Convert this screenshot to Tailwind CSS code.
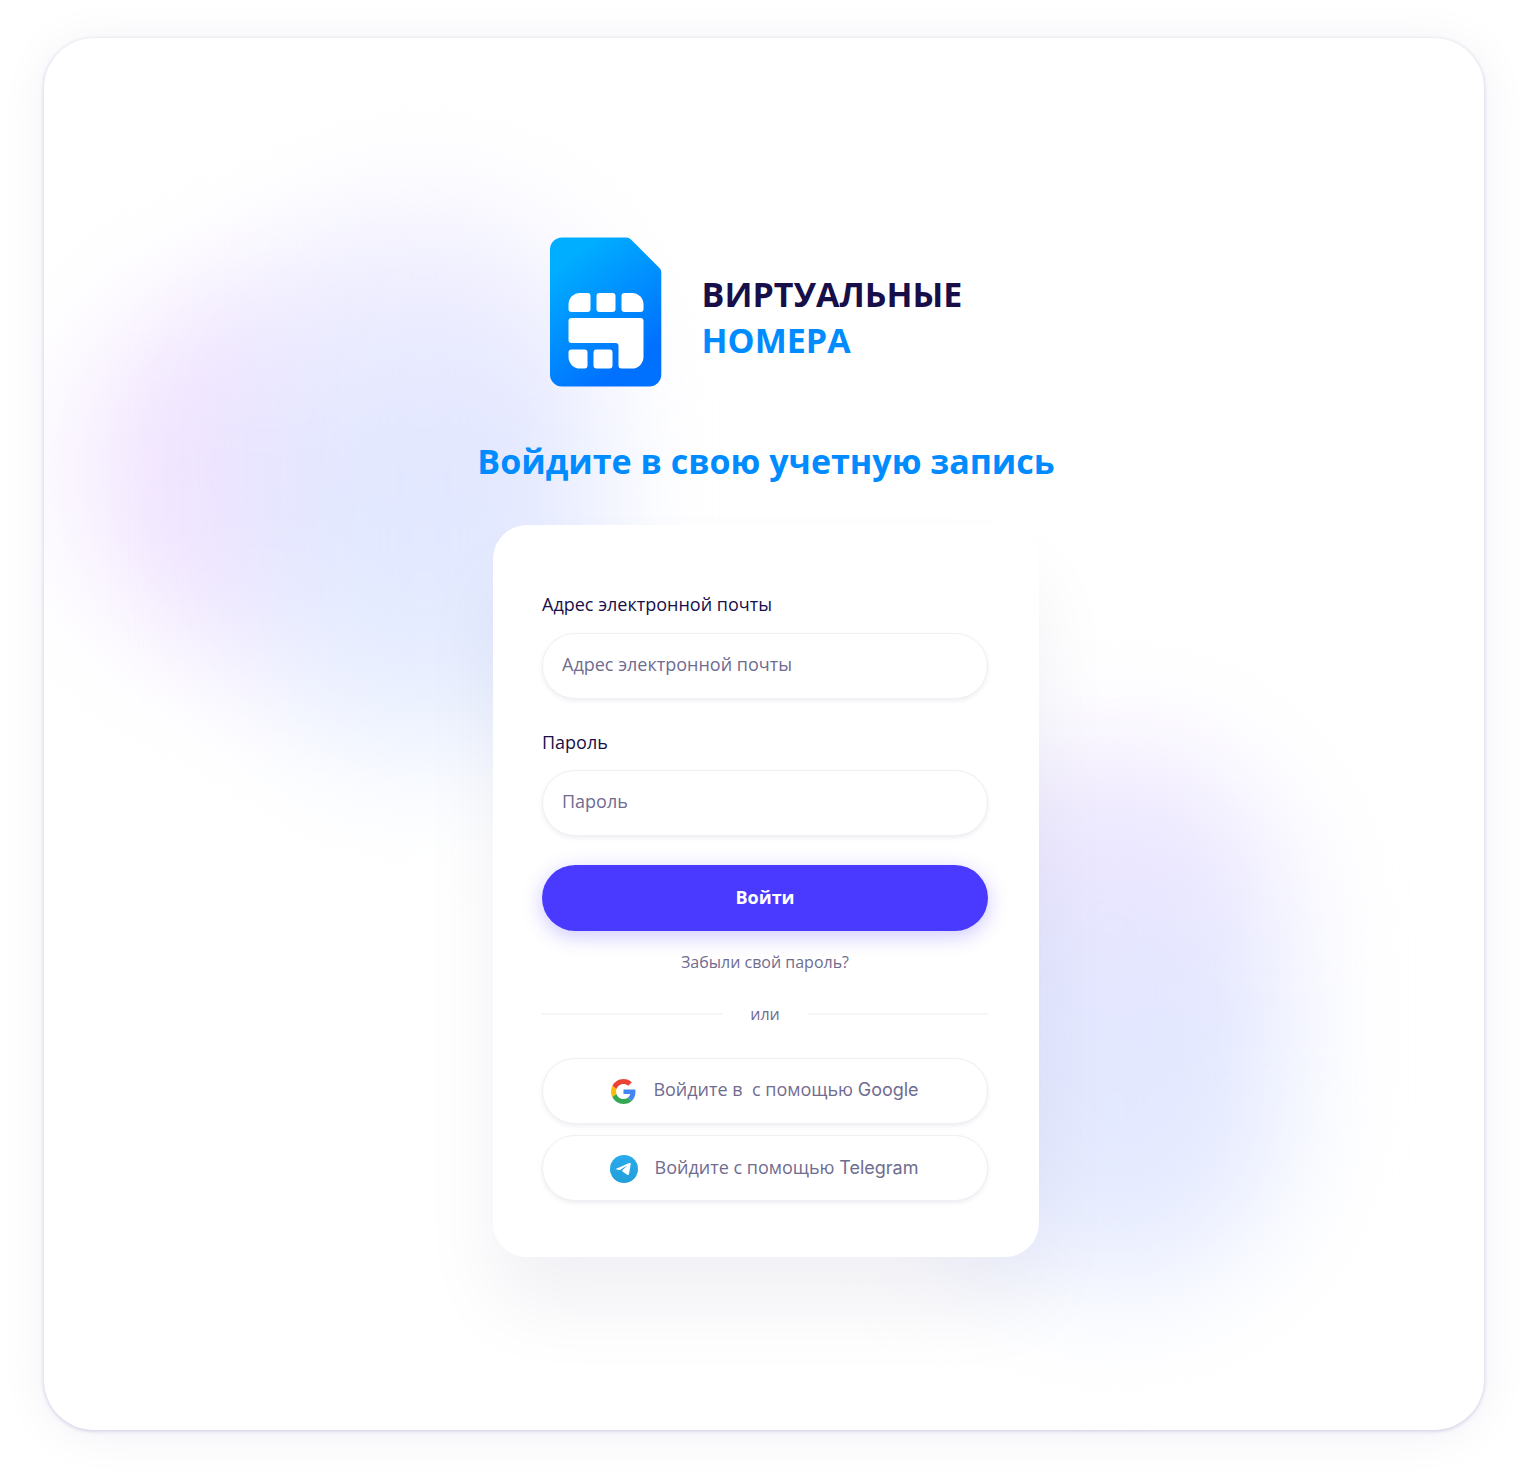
<!DOCTYPE html>
<html lang="ru">
<head>
<meta charset="utf-8">
<meta name="viewport" content="width=device-width, initial-scale=1">
<title>Виртуальные номера — вход</title>
<script src="https://cdn.jsdelivr.net/npm/@tailwindcss/browser@4"></script>
</head>
<body class="min-h-screen bg-white px-[44px] pt-[38px] pb-[50px] font-['Open_Sans','Noto_Sans',sans-serif] text-[#6f6c90]">
  <main class="relative isolate flex flex-col items-center overflow-hidden rounded-[50px] bg-white pt-[199px] pb-[173px] pl-1 shadow-[0_1px_4px_rgba(25,15,120,0.2),0_4px_50px_rgba(25,15,120,0.06)]">
    <!-- Background glows -->
    <div class="absolute top-[250px] left-[40px] -z-10 h-[370px] w-[360px] rounded-full bg-[#efe1ff]/90 blur-[60px]" aria-hidden="true"></div>
    <div class="absolute top-[170px] left-[210px] -z-10 h-[560px] w-[340px] rounded-full bg-linear-to-b from-[#f2efff] via-[#e0e6ff] to-[#ebf2ff] blur-[60px]" aria-hidden="true"></div>
    <div class="absolute top-[710px] right-[200px] -z-10 h-[540px] w-[340px] rounded-full bg-linear-to-b from-[#f0e6ff] via-[#e2e7ff] to-[#e6ecff] blur-[60px]" aria-hidden="true"></div>

    <div class="flex items-center gap-10 pr-5">
      <svg class="h-[150px] w-[112px]" viewBox="0 0 112 150" role="img" aria-label="SIM-карта">
        <defs>
          <linearGradient id="sim" gradientUnits="userSpaceOnUse" x1="20" y1="20" x2="92" y2="118">
            <stop offset="0" stop-color="#00aeff"/>
            <stop offset="1" stop-color="#0070ff"/>
          </linearGradient>
        </defs>
        <path fill="url(#sim)" d="M12 .5H76Q79 .5 81 2.500L109.500 31Q111.300 33 111.300 35V137.500A12 12 0 0 1 99.300 149.500H12A12 12 0 0 1 0 137.500V12.500A12 12 0 0 1 12 .5Z"/>
        <g fill="#fff">
          <path d="M30 56H37.500A3 3 0 0 1 40.500 59V72A3 3 0 0 1 37.500 75H21.500A3 3 0 0 1 18.500 72V67.500A11.500 11.500 0 0 1 30 56Z"/>
          <rect x="46.500" y="56" width="19" height="19" rx="3"/>
          <path d="M74.500 56H82A11.500 11.500 0 0 1 93.500 67.500V72A3 3 0 0 1 90.500 75H74.500A3 3 0 0 1 71.500 72V59A3 3 0 0 1 74.500 56Z"/>
          <path d="M21.500 81H90.500A3 3 0 0 1 93.500 84V120A11.500 11.500 0 0 1 82 131.500H71.500A3 3 0 0 1 68.500 128.500V109A3 3 0 0 0 65.500 106H21.500A3 3 0 0 1 18.500 103V84A3 3 0 0 1 21.500 81Z"/>
          <path d="M21.500 112.500H34.500A3 3 0 0 1 37.500 115.500V128.500A3 3 0 0 1 34.500 131.500H30A11.500 11.500 0 0 1 18.500 120V115.500A3 3 0 0 1 21.500 112.500Z"/>
          <rect x="43.500" y="112.500" width="19" height="19" rx="3"/>
        </g>
      </svg>
      <p class="pt-[10px] text-[34px] leading-[46px] font-bold text-[#170f49]">ВИРТУАЛЬНЫЕ<br><span class="text-[#008bff]">НОМЕРА</span></p>
    </div>

    <h1 class="mt-[50px] text-[34px] leading-[48px] font-bold text-[#008bff]">Войдите в свою учетную запись</h1>

    <form class="mt-10 flex w-full max-w-[546px] flex-col rounded-[34px] bg-white pr-[51px] pl-[49px] pt-[67px] pb-[56px] text-[18px] leading-6 shadow-[0_50px_80px_rgba(25,15,80,0.06)]">
      <label for="email" class="text-[#170f49]">Адрес электронной почты</label>
      <input id="email" type="email" placeholder="Адрес электронной почты" class="mt-[17px] h-[66px] w-full rounded-full border border-[#eff0f6] bg-white px-[19px] pb-1 shadow-[0_2px_5px_rgba(19,18,66,0.07)] outline-none placeholder:text-[#6f6c90]">

      <label for="password" class="mt-[31px] text-[#170f49]">Пароль</label>
      <input id="password" type="password" placeholder="Пароль" class="mt-4 h-[66px] w-full rounded-full border border-[#eff0f6] bg-white px-[19px] pb-1 shadow-[0_2px_5px_rgba(19,18,66,0.07)] outline-none placeholder:text-[#6f6c90]">

      <button type="submit" class="mt-[29px] h-[66px] rounded-full bg-[#4a3aff] pb-[2px] font-bold text-white shadow-[0_5px_20px_rgba(74,58,255,0.28)]">Войти</button>

      <a href="#" class="mt-[19px] self-center text-[16px]">Забыли свой пароль?</a>

      <div class="mt-7 flex items-center justify-between text-[16px]">
        <span class="h-[2px] w-[180px] bg-[#f5f5f7]"></span>
        <span>или</span>
        <span class="h-[2px] w-[180px] bg-[#f5f5f7]"></span>
      </div>

      <button type="button" class="mt-8 flex h-[66px] items-center justify-center gap-[17px] rounded-full border border-[#eff0f6] bg-white shadow-[0_2px_5px_rgba(19,18,66,0.07)]">
        <svg class="size-[25px]" viewBox="0 0 48 48" aria-hidden="true">
          <path fill="#EA4335" d="M24 9.500c3.540 0 6.710 1.220 9.210 3.600l6.850-6.850C35.900 2.380 30.470 0 24 0 14.620 0 6.510 5.380 2.560 13.220l7.980 6.190C12.430 13.720 17.740 9.500 24 9.500z"/>
          <path fill="#4285F4" d="M46.980 24.550c0-1.570-.15-3.090-.38-4.550H24v9.020h12.940c-.58 2.960-2.260 5.480-4.780 7.180l7.730 6c4.510-4.180 7.090-10.360 7.090-17.650z"/>
          <path fill="#FBBC05" d="M10.530 28.590c-.48-1.450-.76-2.990-.76-4.590s.27-3.140.76-4.590l-7.980-6.190C.92 16.460 0 20.120 0 24c0 3.880.92 7.540 2.560 10.780l7.970-6.190z"/>
          <path fill="#34A853" d="M24 48c6.480 0 11.930-2.130 15.890-5.810l-7.730-6c-2.150 1.450-4.920 2.300-8.160 2.300-6.260 0-11.570-4.220-13.470-9.910l-7.980 6.190C6.510 42.620 14.620 48 24 48z"/>
        </svg>
        <span class="pb-1 whitespace-pre">Войдите в  с помощью <span class="font-[Inter]">Google</span></span>
      </button>

      <button type="button" class="mt-[11px] flex h-[66px] items-center justify-center gap-[17px] rounded-full border border-[#eff0f6] bg-white pt-[2px] pr-[2px] shadow-[0_2px_5px_rgba(19,18,66,0.07)]">
        <svg class="size-7" viewBox="0 0 28 28" aria-hidden="true">
          <defs>
            <linearGradient id="tg" x1="0" y1="0" x2="0" y2="1">
              <stop offset="0" stop-color="#2aabee"/>
              <stop offset="1" stop-color="#229ed9"/>
            </linearGradient>
          </defs>
          <circle cx="14" cy="14" r="14" fill="url(#tg)"/>
          <path fill="#fff" d="M6.100 13.700 19.200 8.100Q20.900 7.600 20.700 9.200L19 19Q18.600 20.700 17.200 19.800L12.500 16.500Q11.700 15.900 12.400 15.200L16.600 11.100Q16.700 10.700 16.200 10.900L10.400 14.700Q9.700 15.200 8.800 15L6.200 14.300Q5.300 14 6.100 13.700Z"/>
        </svg>
        <span class="pb-1">Войдите с помощью <span class="font-[Inter]">Telegram</span></span>
      </button>
    </form>
  </main>
</body>
</html>
